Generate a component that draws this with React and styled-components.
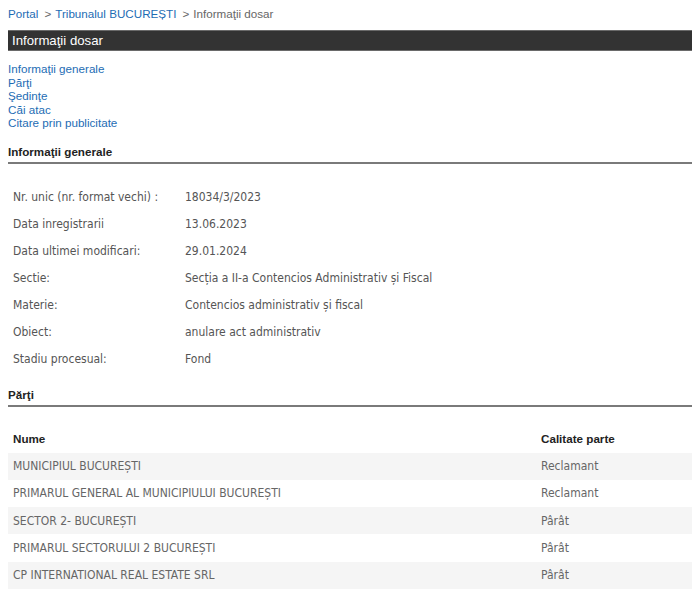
import React from "react";
import styled, { createGlobalStyle } from "styled-components";

const Global = createGlobalStyle`
  body {
    margin: 8px;
    background: #fff;
    font-family: "Liberation Sans", Arial, sans-serif;
    font-size: 11.65px;
    color: #333;
  }
`;

const Breadcrumb = styled.div`
  height: 12px;
  line-height: 12px;
  color: #666;
`;
const Crumb = styled.a`
  color: #1d6cb4;
  text-decoration: none;
`;
const Sep = styled.span`
  margin: 0 4px 0 6px;
`;

const TitleBar = styled.div`
  margin-top: 10px;
  height: 19px;
  padding-left: 4px;
  line-height: 19px;
  background: #333;
  border-top: 1px solid #6a6a6a;
  border-bottom: 1px solid #6a6a6a;
  color: #fff;
  font-size: 13.2px;
`;

const Nav = styled.ul`
  list-style: none;
  margin: 11px 0 0;
  padding: 0;
  line-height: 13.5px;
`;
const NavLink = styled.a`
  color: #1d6cb4;
  text-decoration: none;
`;

const SectionTitle = styled.h3`
  margin: 15px 0 0;
  padding-bottom: 3px;
  border-bottom: 2px solid #7a7a7a;
  font-size: 11.65px;
  font-weight: bold;
  color: #222;
  line-height: 14px;
`;

const InfoTable = styled.div`
  display: grid;
  grid-template-columns: 172px 1fr;
  padding: 20px 0 0 5px;
  font-family: "DejaVu Sans Condensed", "DejaVu Sans", sans-serif;
  font-size: 12px;
  color: #555;
`;
const Cell = styled.div`
  height: 27px;
  line-height: 27px;
  white-space: nowrap;
`;

const PartiTable = styled.table`
  width: 100%;
  margin-top: 17px;
  border-collapse: collapse;
`;
const Th = styled.th`
  text-align: left;
  padding: 0 5px;
  height: 29px;
  font-weight: bold;
  color: #222;
  width: ${p => p.$w || "auto"};
`;
const Tr = styled.tr`
  background: ${p => (p.$odd ? "#f5f5f5" : "#fff")};
`;
const Td = styled.td`
  padding: 0 5px;
  height: 27.25px;
  font-family: "DejaVu Sans Condensed", "DejaVu Sans", sans-serif;
  font-size: 12px;
  color: #666;
  white-space: nowrap;
`;

const info = [
  ["Nr. unic (nr. format vechi) :", "18034/3/2023"],
  ["Data inregistrarii", "13.06.2023"],
  ["Data ultimei modificari:", "29.01.2024"],
  ["Sectie:", "Secția a II-a Contencios Administrativ și Fiscal"],
  ["Materie:", "Contencios administrativ și fiscal"],
  ["Obiect:", "anulare act administrativ"],
  ["Stadiu procesual:", "Fond"],
];

const parti = [
  ["MUNICIPIUL BUCUREȘTI", "Reclamant"],
  ["PRIMARUL GENERAL AL MUNICIPIULUI BUCUREȘTI", "Reclamant"],
  ["SECTOR 2- BUCUREȘTI", "Pârât"],
  ["PRIMARUL SECTORULUI 2 BUCUREȘTI", "Pârât"],
  ["CP INTERNATIONAL REAL ESTATE SRL", "Pârât"],
];

export default function App() {
  return (
    <>
      <Global />
      <Breadcrumb>
        <Crumb href="#">Portal</Crumb>
        <Sep>&gt;</Sep>
        <Crumb href="#">Tribunalul BUCUREȘTI</Crumb>
        <Sep>&gt;</Sep>
        Informaţii dosar
      </Breadcrumb>
      <TitleBar>Informaţii dosar</TitleBar>
      <Nav>
        <li><NavLink href="#">Informaţii generale</NavLink></li>
        <li><NavLink href="#">Părţi</NavLink></li>
        <li><NavLink href="#">Şedinţe</NavLink></li>
        <li><NavLink href="#">Căi atac</NavLink></li>
        <li><NavLink href="#">Citare prin publicitate</NavLink></li>
      </Nav>
      <SectionTitle>Informaţii generale</SectionTitle>
      <InfoTable>
        {info.map(([k, v]) => (
          <React.Fragment key={k}>
            <Cell>{k}</Cell>
            <Cell>{v}</Cell>
          </React.Fragment>
        ))}
      </InfoTable>
      <SectionTitle>Părţi</SectionTitle>
      <PartiTable>
        <thead>
          <tr>
            <Th>Nume</Th>
            <Th $w="146px">Calitate parte</Th>
          </tr>
        </thead>
        <tbody>
          {parti.map(([n, c], i) => (
            <Tr key={n} $odd={i % 2 === 0}>
              <Td>{n}</Td>
              <Td>{c}</Td>
            </Tr>
          ))}
        </tbody>
      </PartiTable>
    </>
  );
}
